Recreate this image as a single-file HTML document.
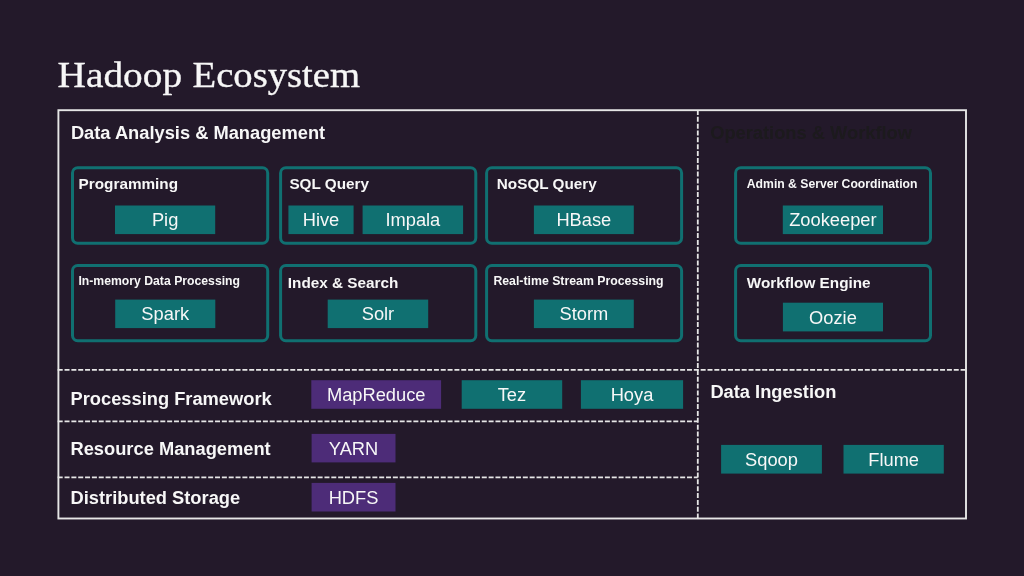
<!DOCTYPE html>
<html><head><meta charset="utf-8"><title>Hadoop Ecosystem</title>
<style>html,body{margin:0;padding:0;background:#23192a;width:1024px;height:576px;overflow:hidden}svg{display:block;will-change:transform}</style>
</head><body>
<svg width="1024" height="576" viewBox="0 0 1024 576">
<rect x="0" y="0" width="1024" height="576" fill="#23192a"/>
<text x="57.6" y="86.7" font-family="'Liberation Serif', serif" font-size="36.5" font-weight="normal" fill="#f7f7f7" text-anchor="start" textLength="124.5" lengthAdjust="spacingAndGlyphs" stroke="#f7f7f7" stroke-width="0.35">Hadoop</text>
<text x="192.6" y="86.7" font-family="'Liberation Serif', serif" font-size="36.5" font-weight="normal" fill="#f7f7f7" text-anchor="start" textLength="167.5" lengthAdjust="spacingAndGlyphs" stroke="#f7f7f7" stroke-width="0.35">Ecosystem</text>
<rect x="58.4" y="110.2" width="907.6" height="408.3" fill="none" stroke="#e6e6e6" stroke-width="1.9"/>
<line x1="57.7" y1="369.9" x2="966" y2="369.9" stroke="#e6e6e6" stroke-width="1.8" stroke-dasharray="5 1.84"/>
<line x1="57.7" y1="421.35" x2="697.8" y2="421.35" stroke="#e6e6e6" stroke-width="1.7" stroke-dasharray="5 1.84"/>
<line x1="57.7" y1="477.3" x2="697.8" y2="477.3" stroke="#e6e6e6" stroke-width="1.7" stroke-dasharray="5 1.84"/>
<line x1="697.8" y1="110" x2="697.8" y2="518" stroke="#e6e6e6" stroke-width="1.8" stroke-dasharray="5 1.84"/>
<text x="70.9" y="139.1" font-family="'Liberation Sans', sans-serif" font-size="18.3" font-weight="bold" fill="#f7f7f7" text-anchor="start" >Data Analysis &amp; Management</text>
<text x="710.2" y="139.0" font-family="'Liberation Sans', sans-serif" font-size="18.3" font-weight="bold" fill="#1c1a1d" text-anchor="start" >Operations &amp; Workflow</text>
<text x="70.5" y="404.9" font-family="'Liberation Sans', sans-serif" font-size="18.3" font-weight="bold" fill="#f7f7f7" text-anchor="start" >Processing Framework</text>
<text x="70.5" y="455.0" font-family="'Liberation Sans', sans-serif" font-size="18.3" font-weight="bold" fill="#f7f7f7" text-anchor="start" >Resource Management</text>
<text x="70.5" y="503.9" font-family="'Liberation Sans', sans-serif" font-size="18.3" font-weight="bold" fill="#f7f7f7" text-anchor="start" >Distributed Storage</text>
<text x="710.4" y="397.9" font-family="'Liberation Sans', sans-serif" font-size="18.3" font-weight="bold" fill="#f7f7f7" text-anchor="start" >Data Ingestion</text>
<rect x="72.50" y="167.80" width="195.20" height="75.50" rx="5.2" fill="none" stroke="#107071" stroke-width="3.0"/>
<rect x="72.50" y="265.50" width="195.20" height="75.20" rx="5.2" fill="none" stroke="#107071" stroke-width="3.0"/>
<rect x="280.60" y="167.80" width="195.20" height="75.50" rx="5.2" fill="none" stroke="#107071" stroke-width="3.0"/>
<rect x="280.60" y="265.50" width="195.20" height="75.20" rx="5.2" fill="none" stroke="#107071" stroke-width="3.0"/>
<rect x="486.60" y="167.80" width="195.00" height="75.50" rx="5.2" fill="none" stroke="#107071" stroke-width="3.0"/>
<rect x="486.60" y="265.50" width="195.00" height="75.20" rx="5.2" fill="none" stroke="#107071" stroke-width="3.0"/>
<rect x="735.60" y="167.80" width="194.90" height="75.50" rx="5.2" fill="none" stroke="#107071" stroke-width="3.0"/>
<rect x="735.60" y="265.50" width="194.90" height="75.20" rx="5.2" fill="none" stroke="#107071" stroke-width="3.0"/>
<text x="78.6" y="188.8" font-family="'Liberation Sans', sans-serif" font-size="15.3" font-weight="bold" fill="#f7f7f7" text-anchor="start" >Programming</text>
<text x="289.4" y="189.0" font-family="'Liberation Sans', sans-serif" font-size="15.3" font-weight="bold" fill="#f7f7f7" text-anchor="start" >SQL Query</text>
<text x="496.8" y="189.1" font-family="'Liberation Sans', sans-serif" font-size="15.3" font-weight="bold" fill="#f7f7f7" text-anchor="start" >NoSQL Query</text>
<text x="746.8" y="188.1" font-family="'Liberation Sans', sans-serif" font-size="12.2" font-weight="bold" fill="#f7f7f7" text-anchor="start" >Admin &amp; Server Coordination</text>
<text x="78.4" y="285.3" font-family="'Liberation Sans', sans-serif" font-size="12.22" font-weight="bold" fill="#f7f7f7" text-anchor="start" >In-memory Data Processing</text>
<text x="287.8" y="287.7" font-family="'Liberation Sans', sans-serif" font-size="15.3" font-weight="bold" fill="#f7f7f7" text-anchor="start" >Index &amp; Search</text>
<text x="493.4" y="285.3" font-family="'Liberation Sans', sans-serif" font-size="12.3" font-weight="bold" fill="#f7f7f7" text-anchor="start" >Real-time Stream Processing</text>
<text x="746.8" y="288.4" font-family="'Liberation Sans', sans-serif" font-size="15.3" font-weight="bold" fill="#f7f7f7" text-anchor="start" >Workflow Engine</text>
<rect x="115.0" y="205.5" width="100.20" height="28.60" fill="#107071"/>
<text x="165.10" y="226.25" font-family="'Liberation Sans', sans-serif" font-size="18.3" font-weight="normal" fill="#f7f7f7" text-anchor="middle" >Pig</text>
<rect x="288.4" y="205.5" width="65.20" height="28.60" fill="#107071"/>
<text x="321.00" y="226.25" font-family="'Liberation Sans', sans-serif" font-size="18.3" font-weight="normal" fill="#f7f7f7" text-anchor="middle" >Hive</text>
<rect x="362.6" y="205.5" width="100.50" height="28.60" fill="#107071"/>
<text x="412.85" y="226.25" font-family="'Liberation Sans', sans-serif" font-size="18.3" font-weight="normal" fill="#f7f7f7" text-anchor="middle" >Impala</text>
<rect x="533.9" y="205.5" width="99.90" height="28.60" fill="#107071"/>
<text x="583.85" y="226.25" font-family="'Liberation Sans', sans-serif" font-size="18.3" font-weight="normal" fill="#f7f7f7" text-anchor="middle" >HBase</text>
<rect x="782.8" y="205.5" width="100.20" height="28.60" fill="#107071"/>
<text x="832.90" y="226.25" font-family="'Liberation Sans', sans-serif" font-size="18.3" font-weight="normal" fill="#f7f7f7" text-anchor="middle" >Zookeeper</text>
<rect x="115.2" y="299.6" width="100.10" height="28.50" fill="#107071"/>
<text x="165.25" y="320.30" font-family="'Liberation Sans', sans-serif" font-size="18.3" font-weight="normal" fill="#f7f7f7" text-anchor="middle" >Spark</text>
<rect x="327.7" y="299.6" width="100.50" height="28.50" fill="#107071"/>
<text x="377.95" y="320.30" font-family="'Liberation Sans', sans-serif" font-size="18.3" font-weight="normal" fill="#f7f7f7" text-anchor="middle" >Solr</text>
<rect x="533.9" y="299.6" width="99.90" height="28.50" fill="#107071"/>
<text x="583.85" y="320.30" font-family="'Liberation Sans', sans-serif" font-size="18.3" font-weight="normal" fill="#f7f7f7" text-anchor="middle" >Storm</text>
<rect x="782.9" y="302.7" width="100.10" height="28.70" fill="#107071"/>
<text x="832.95" y="323.50" font-family="'Liberation Sans', sans-serif" font-size="18.3" font-weight="normal" fill="#f7f7f7" text-anchor="middle" >Oozie</text>
<rect x="311.3" y="380.2" width="129.80" height="28.60" fill="#4d2c78"/>
<text x="376.20" y="400.95" font-family="'Liberation Sans', sans-serif" font-size="18.3" font-weight="normal" fill="#f7f7f7" text-anchor="middle" >MapReduce</text>
<rect x="461.7" y="380.2" width="100.50" height="28.60" fill="#107071"/>
<text x="511.95" y="400.95" font-family="'Liberation Sans', sans-serif" font-size="18.3" font-weight="normal" fill="#f7f7f7" text-anchor="middle" >Tez</text>
<rect x="580.9" y="380.2" width="102.20" height="28.60" fill="#107071"/>
<text x="632.00" y="400.95" font-family="'Liberation Sans', sans-serif" font-size="18.3" font-weight="normal" fill="#f7f7f7" text-anchor="middle" >Hoya</text>
<rect x="311.6" y="433.9" width="83.90" height="28.50" fill="#4d2c78"/>
<text x="353.55" y="454.60" font-family="'Liberation Sans', sans-serif" font-size="18.3" font-weight="normal" fill="#f7f7f7" text-anchor="middle" >YARN</text>
<rect x="311.6" y="482.9" width="83.90" height="28.60" fill="#4d2c78"/>
<text x="353.55" y="503.65" font-family="'Liberation Sans', sans-serif" font-size="18.3" font-weight="normal" fill="#f7f7f7" text-anchor="middle" >HDFS</text>
<rect x="721.1" y="444.9" width="100.80" height="28.70" fill="#107071"/>
<text x="771.50" y="465.70" font-family="'Liberation Sans', sans-serif" font-size="18.3" font-weight="normal" fill="#f7f7f7" text-anchor="middle" >Sqoop</text>
<rect x="843.5" y="444.9" width="100.30" height="28.70" fill="#107071"/>
<text x="893.65" y="465.70" font-family="'Liberation Sans', sans-serif" font-size="18.3" font-weight="normal" fill="#f7f7f7" text-anchor="middle" >Flume</text>
</svg>
</body></html>
